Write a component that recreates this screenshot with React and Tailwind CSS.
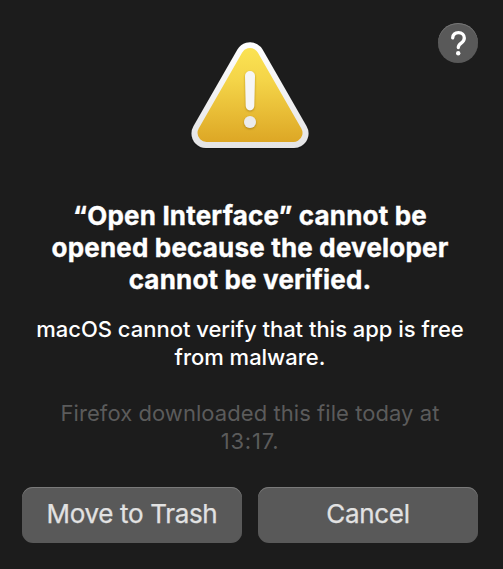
function WarningIcon() {
  return (
    <svg width="128" height="120" viewBox="186 36 128 120" className="block">
      <defs>
        <linearGradient id="rim" gradientUnits="userSpaceOnUse" x1="0" y1="42" x2="0" y2="148">
          <stop offset="0" stopColor="#ffffff" />
          <stop offset="1" stopColor="#e4e4e5" />
        </linearGradient>
        <linearGradient id="fill" gradientUnits="userSpaceOnUse" x1="0" y1="48" x2="0" y2="142">
          <stop offset="0" stopColor="#fbe353" />
          <stop offset="0.35" stopColor="#f4d448" />
          <stop offset="1" stopColor="#dda725" />
        </linearGradient>
        <filter id="shade" x="-30%" y="-30%" width="160%" height="160%">
          <feDropShadow dx="0" dy="1" stdDeviation="0.8" floodColor="#8a6410" floodOpacity="0.6" />
        </filter>
        <filter id="drop" x="-20%" y="-20%" width="140%" height="140%">
          <feDropShadow dx="0" dy="1" stdDeviation="1.2" floodColor="#000000" floodOpacity="0.4" />
        </filter>
      </defs>
      <path d="M250 56.8 L294 133.4 L206 133.4 Z" fill="url(#rim)" stroke="url(#rim)" strokeWidth="29" strokeLinejoin="round" filter="url(#drop)" />
      <path d="M250 57 L293.5 133 L206.5 133 Z" fill="url(#fill)" stroke="url(#fill)" strokeWidth="18" strokeLinejoin="round" />
      <g filter="url(#shade)">
        <path d="M245 76 A5 5 0 0 1 255 76 L254.2 106 A4.2 4.2 0 0 1 245.8 106 Z" fill="#f6f6f6" />
        <circle cx="250" cy="122" r="6" fill="#ebebec" />
      </g>
    </svg>
  );
}

function ActionButton({ children }) {
  return (
    <button className="flex h-14 w-[220px] items-center justify-center rounded-[11px] bg-[#595959] pb-[3px] text-[26px] tracking-[-0.33px] text-[#e2e2e2] shadow-[inset_0_1px_0_#7a7a7a] [-webkit-text-stroke:0.25px_#e2e2e2]">
      {children}
    </button>
  );
}

export default function App() {
  return (
    <main className="relative flex h-[569px] w-[503px] flex-col items-center overflow-hidden bg-[#1c1c1c] pt-9 pr-[3px] font-['Inter',sans-serif]">
      <button aria-label="Help" className="absolute top-[23px] left-[438px] flex size-10 items-center justify-center rounded-full bg-[#595959] text-white shadow-[inset_0_1px_0_#757575]">
        <svg width="40" height="40" viewBox="0 0 40 40" fill="none">
          <path d="M14.7 14.9 C15 11.5 17.4 9.7 20.5 9.7 C24 9.7 26.3 11.9 26.3 15 C26.3 17.5 25.1 18.8 23.2 20.1 C21.1 21.5 20.3 22.4 20.3 24.6" stroke="currentColor" strokeWidth="3.3" strokeLinecap="round" strokeLinejoin="round" />
          <circle cx="20.2" cy="30.2" r="2.2" fill="currentColor" />
        </svg>
      </button>
      <WarningIcon />
      <h1 className="mt-11 flex flex-col items-center text-[26px] leading-8 font-bold tracking-[0.18px] whitespace-nowrap text-white [-webkit-text-stroke:0.35px_#fff]">
        <span>“Open Interface” cannot be</span>
        <span>opened because the developer</span>
        <span>cannot be verified.</span>
      </h1>
      <p className="mt-[19px] flex flex-col items-center text-[22px] leading-7 font-medium tracking-[-0.02px] whitespace-nowrap text-white">
        <span>macOS cannot verify that this app is free</span>
        <span>from malware.</span>
      </p>
      <p className="mt-7 flex flex-col items-center text-[22px] leading-7 tracking-[0.06px] whitespace-nowrap text-[#5b5b5b]">
        <span>Firefox downloaded this file today at</span>
        <span className="tracking-[0.8px]">13:17.</span>
      </p>
      <div className="mt-8 flex gap-4">
        <ActionButton>Move to Trash</ActionButton>
        <ActionButton>Cancel</ActionButton>
      </div>
    </main>
  );
}
